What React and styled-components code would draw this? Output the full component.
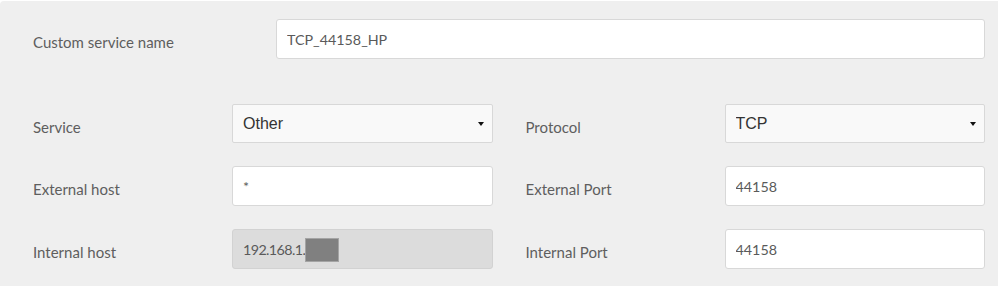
import React from 'react';
import styled, { createGlobalStyle } from 'styled-components';

const GlobalStyle = createGlobalStyle`
  html, body {
    margin: 0;
    padding: 0;
    background: #ffffff;
  }
  body {
    font-family: Lato, 'Open Sans', sans-serif;
  }
`;

const Panel = styled.div`
  margin-top: 1px;
  min-height: 285px;
  box-sizing: border-box;
  background: #efefef;
  border-radius: 4px 0 0 0;
  padding: 18px 13px 0 33px;
`;

const TopRow = styled.div`
  display: grid;
  grid-template-columns: 243px 1fr;
  align-items: center;
  margin-bottom: 45px;
`;

const Grid = styled.div`
  display: grid;
  grid-template-columns: 1fr 1fr;
  column-gap: 33px;
  row-gap: 23px;
`;

const Field = styled.div`
  display: grid;
  grid-template-columns: 199px 1fr;
  align-items: center;
`;

const Label = styled.label`
  font-family: Lato, 'Open Sans', sans-serif;
  font-size: 15px;
  color: #5e5e5e;
  padding-top: 6px;
  white-space: nowrap;
`;

const TextInput = styled.input`
  box-sizing: border-box;
  width: 100%;
  height: 40px;
  margin: 0;
  padding: 0 10px;
  border: 1px solid #d8d8d8;
  border-radius: 3px;
  background: #ffffff;
  font-family: Lato, 'Open Sans', sans-serif;
  font-size: 14.3px;
  color: #5a5a5a;
  outline: none;
`;

const ReadOnlyField = styled.div`
  box-sizing: border-box;
  height: 40px;
  display: flex;
  align-items: center;
  padding: 0 10px;
  border: 1px solid #d2d2d2;
  border-radius: 3px;
  background: #dcdcdc;
  font-family: Lato, 'Open Sans', sans-serif;
  font-size: 14.3px;
  letter-spacing: -0.6px;
  color: #5a5a5a;
`;

const Redacted = styled.span`
  display: inline-block;
  width: 32px;
  height: 22px;
  margin-left: 1px;
  margin-top: 2px;
  background: #808080;
  box-shadow: 0 0 0 1px #a4a4a4;
`;

const SelectWrap = styled.div`
  position: relative;
  height: 39px;

  &::after {
    content: '';
    position: absolute;
    right: 9px;
    top: 18px;
    border-left: 3.5px solid transparent;
    border-right: 3.5px solid transparent;
    border-top: 4px solid #111;
    pointer-events: none;
  }
`;

const Select = styled.select`
  appearance: none;
  -webkit-appearance: none;
  box-sizing: border-box;
  width: 100%;
  height: 100%;
  margin: 0;
  padding: 0 10px;
  border: 1px solid #d8d8d8;
  border-radius: 2px;
  background: #f9f9f9;
  font-family: 'Liberation Sans', Arial, sans-serif;
  font-size: 16px;
  color: #333333;
  outline: none;
`;

function Dropdown({ value, options }) {
  return (
    <SelectWrap>
      <Select defaultValue={value}>
        {options.map((o) => (
          <option key={o}>{o}</option>
        ))}
      </Select>
    </SelectWrap>
  );
}

export default function App() {
  return (
    <>
      <GlobalStyle />
      <Panel>
        <TopRow>
          <Label>Custom service name</Label>
          <TextInput defaultValue="TCP_44158_HP" />
        </TopRow>
        <Grid>
          <Field>
            <Label>Service</Label>
            <Dropdown value="Other" options={['Other', 'HTTP', 'FTP']} />
          </Field>
          <Field>
            <Label>Protocol</Label>
            <Dropdown value="TCP" options={['TCP', 'UDP', 'Both']} />
          </Field>

          <Field>
            <Label>External host</Label>
            <TextInput defaultValue="*" />
          </Field>
          <Field>
            <Label>External Port</Label>
            <TextInput defaultValue="44158" />
          </Field>

          <Field>
            <Label>Internal host</Label>
            <ReadOnlyField>
              192.168.1.<Redacted />
            </ReadOnlyField>
          </Field>
          <Field>
            <Label>Internal Port</Label>
            <TextInput defaultValue="44158" />
          </Field>
        </Grid>
      </Panel>
    </>
  );
}
